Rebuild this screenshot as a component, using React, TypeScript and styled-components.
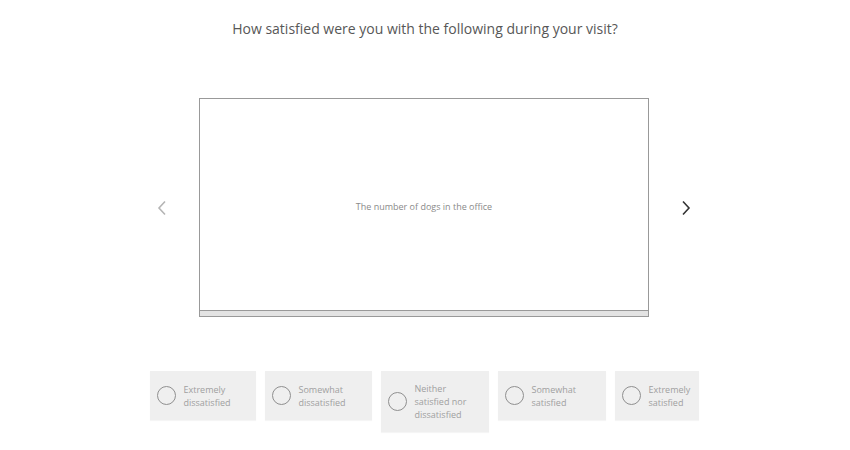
import React from 'react';
import styled, { createGlobalStyle } from 'styled-components';

const GlobalStyle = createGlobalStyle`
  body {
    margin: 0;
    background: #ffffff;
    font-family: "Open Sans", "Liberation Sans", sans-serif;
  }
`;

const options = [
  { label: 'Extremely dissatisfied', width: 106 },
  { label: 'Somewhat dissatisfied', width: 107 },
  { label: 'Neither satisfied nor dissatisfied', width: 108 },
  { label: 'Somewhat satisfied', width: 108 },
  { label: 'Extremely satisfied', width: 84 },
];

function Chevron({ dir, color }: { dir: 'left' | 'right'; color: string }) {
  return (
    <svg width="10" height="16" viewBox="0 0 10 16">
      <path
        d={dir === 'left' ? 'M8 1.5 L2 8 L8 14.5' : 'M2 1.5 L8 8 L2 14.5'}
        fill="none"
        stroke={color}
        strokeWidth="1.6"
      />
    </svg>
  );
}

export default function App() {
  return (
    <Page>
      <GlobalStyle />
      <Question>How satisfied were you with the following during your visit?</Question>

      <Carousel>
        <Arrow>
          <Chevron dir="left" color="#b5b5b5" />
        </Arrow>
        <Card>
          <CardBody>The number of dogs in the office</CardBody>
          <CardBar />
        </Card>
        <Arrow>
          <Chevron dir="right" color="#333333" />
        </Arrow>
      </Carousel>

      <Options>
        {options.map((opt) => (
          <Option key={opt.label} width={opt.width}>
            <Radio />
            <OptionLabel>{opt.label}</OptionLabel>
          </Option>
        ))}
      </Options>
    </Page>
  );
}

const Page = styled.div`
  width: 850px;
  height: 450px;
  display: flex;
  flex-direction: column;
  align-items: center;
  box-sizing: border-box;
  padding-top: 19px;
`;

const Question = styled.h1`
  margin: 0;
  font-size: 14px;
  font-weight: 400;
  line-height: 20px;
  color: #575757;
`;

const Carousel = styled.div`
  margin-top: 59px;
  display: flex;
  align-items: center;
  gap: 32px;
  margin-left: -2px;
`;

const Arrow = styled.div`
  width: 10px;
  display: flex;
  justify-content: center;
`;

const Card = styled.div`
  width: 450px;
  height: 219px;
  box-sizing: border-box;
  border: 1px solid #999999;
  display: flex;
  flex-direction: column;
`;

const CardBody = styled.div`
  flex: 1;
  display: flex;
  align-items: center;
  justify-content: center;
  font-size: 9px;
  color: #8a8a8a;
  padding-top: 3px;
`;

const CardBar = styled.div`
  height: 5px;
  background: #e3e3e3;
  border-top: 1px solid #999999;
`;

const Options = styled.div`
  margin-top: 54px;
  display: flex;
  align-items: flex-start;
  gap: 9px;
  margin-left: -2px;
`;

const Option = styled.div<{ width: number }>`
  width: ${(p) => p.width}px;
  min-height: 49px;
  box-sizing: border-box;
  background: #efefef;
  box-shadow: 0 1px 1px rgba(0, 0, 0, 0.04);
  display: flex;
  align-items: center;
  gap: 8px;
  padding: 11px 6px 11px 7px;
`;

const Radio = styled.span`
  flex: none;
  width: 17px;
  height: 17px;
  border: 1px solid #8f8f8f;
  border-radius: 50%;
`;

const OptionLabel = styled.span`
  font-size: 9px;
  line-height: 13px;
  color: #a0a0a0;
`;
